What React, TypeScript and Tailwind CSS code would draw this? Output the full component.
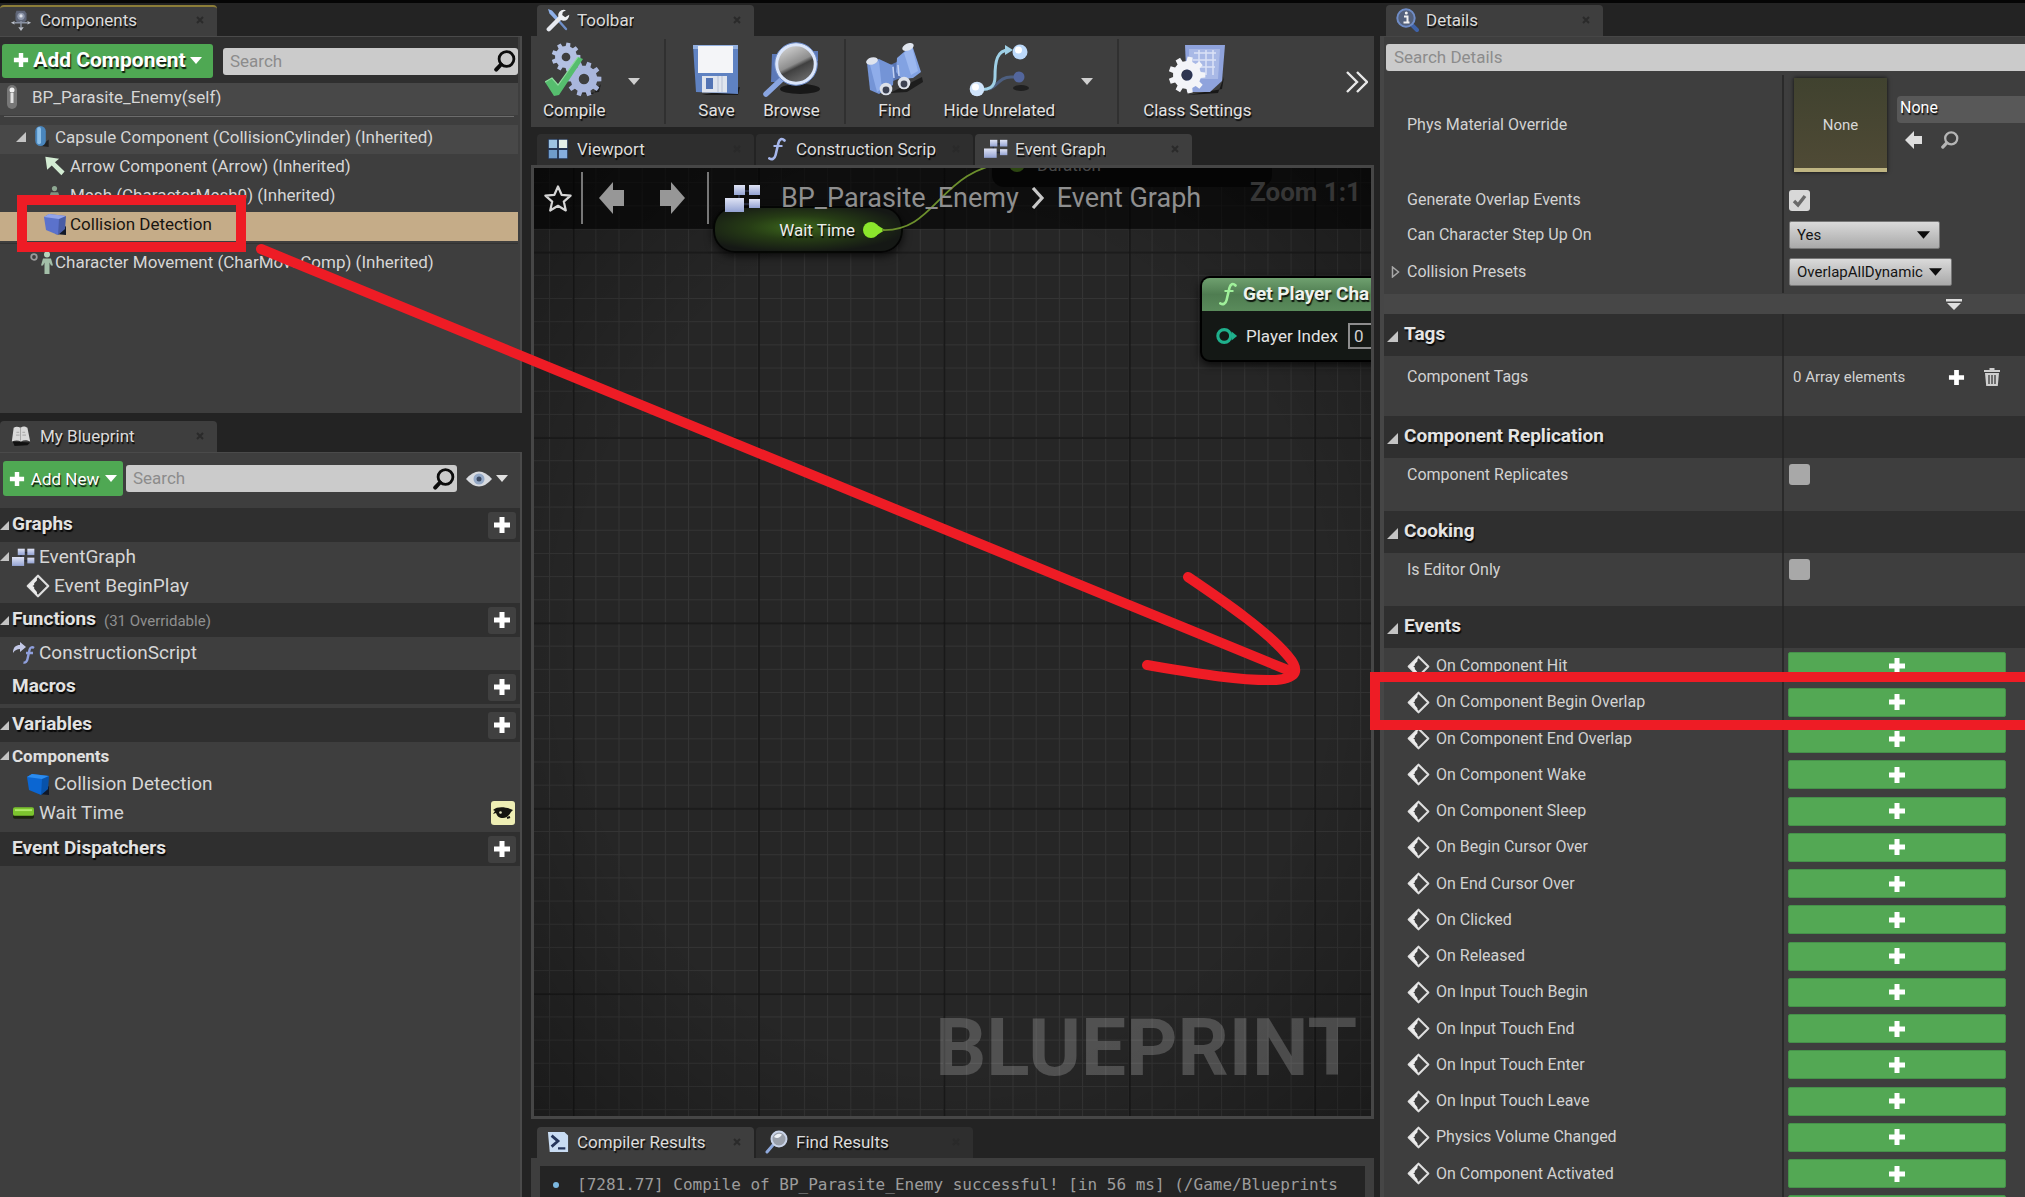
import React, { useState } from "react";
import type { ReactNode } from "react";

const shadow = "[text-shadow:1px_2px_1px_rgba(0,0,0,0.85)]";

/* ---------- small glyphs ---------- */

function Plus({ className }: { className: string }) {
  return (
    <svg viewBox="0 0 18 18" className={className} aria-hidden="true">
      <path d="M6.5 1h5v5.5H17v5h-5.5V17h-5v-5.5H1v-5h5.5z" fill="#fff" />
    </svg>
  );
}

function Caret({ className }: { className: string }) {
  return (
    <svg viewBox="0 0 12 7" className={className} aria-hidden="true">
      <path d="M0 0h12L6 7z" fill="currentColor" />
    </svg>
  );
}

function Expander({ className }: { className: string }) {
  return (
    <svg viewBox="0 0 11 11" className={className} aria-hidden="true">
      <path d="M11 0v11H0z" fill="#c4c4c4" />
    </svg>
  );
}

function SearchGlyph({ className }: { className: string }) {
  return (
    <svg viewBox="0 0 22 22" className={className} fill="none" stroke="currentColor" aria-hidden="true">
      <circle cx="12.5" cy="9" r="7.4" strokeWidth="2.8" />
      <path d="M7 14.5L2.2 19.6" strokeWidth="4" strokeLinecap="round" />
    </svg>
  );
}

function EventDiamond({ className }: { className: string }) {
  return (
    <svg viewBox="0 0 22 22" className={className} aria-hidden="true">
      <path d="M11 1.6L20.4 11 11 20.4 1.6 11z" fill="none" stroke="#dedede" strokeWidth="2" strokeLinejoin="round" />
      <path d="M10 2.500L2 11l8 8.500v-3L7.500 13.500V12L6 11l1.500-1V8.500L10 6z" fill="#ededed" />
    </svg>
  );
}

function GraphBlocks({ className }: { className: string }) {
  return (
    <svg viewBox="0 0 36 28" className={className} aria-hidden="true">
      <defs>
        <linearGradient id="blocks" x1="0" y1="0" x2="0" y2="1">
          <stop offset="0" stopColor="#dfe3f4" />
          <stop offset="1" stopColor="#94a3d3" />
        </linearGradient>
      </defs>
      <path d="M12 7h20M10 20h20M14 8v12" stroke="#23283a" strokeWidth="2" />
      <rect x="9" y="1" width="11" height="10" fill="url(#blocks)" />
      <rect x="24" y="1" width="11" height="10" fill="url(#blocks)" />
      <rect x="0" y="14" width="19" height="14" fill="url(#blocks)" />
      <rect x="24" y="15" width="11" height="9" fill="url(#blocks)" />
    </svg>
  );
}

function FunctionF({ className, color }: { className: string; color: string }) {
  return (
    <svg viewBox="0 0 20 24" className={className} fill="none" stroke={color} aria-hidden="true">
      <path d="M17.5 3.5C15 .8 12.3 2 11.4 6L8.6 18c-.9 3.8-3.6 5-6.3 3.4" strokeWidth="2.6" strokeLinecap="round" />
      <path d="M6.5 9h9" strokeWidth="2" />
    </svg>
  );
}

function gearPath(cx: number, cy: number, r: number, teeth: number) {
  const pts: string[] = [];
  for (let i = 0; i < teeth; i++) {
    const a = (i / teeth) * Math.PI * 2;
    const s = (Math.PI * 2) / teeth;
    [
      [a - s * 0.3, r * 0.76],
      [a - s * 0.2, r],
      [a + s * 0.2, r],
      [a + s * 0.3, r * 0.76],
    ].forEach(([t, d]) => pts.push(`${(cx + Math.cos(t) * d).toFixed(2)},${(cy + Math.sin(t) * d).toFixed(2)}`));
  }
  const h = r * 0.3;
  return `M${pts.join("L")}ZM${cx - h},${cy}a${h},${h} 0 1 0 ${h * 2},0a${h},${h} 0 1 0 ${-h * 2},0Z`;
}

/* ---------- tab icons ---------- */

function ComponentsIcon() {
  return (
    <svg viewBox="0 0 24 24" className="h-[22px] w-[22px]" aria-hidden="true">
      <path d="M7 2h9l2 3v7l-3 3H8l-2-3V5z" fill="#5f6678" />
      <circle cx="12" cy="8" r="4" fill="#8e97ab" />
      <circle cx="12" cy="7.5" r="1.8" fill="#dfe3ea" />
      <path d="M1 15l4-2v4zM23 15l-4-2v4zM9 20h6l-3 4z" fill="#b9bec8" />
      <path d="M5 15h14M12 13v7" stroke="#8b93a4" strokeWidth="1.5" />
    </svg>
  );
}

function BookIcon() {
  return (
    <svg viewBox="0 0 24 24" className="h-[22px] w-[22px]" aria-hidden="true">
      <path d="M3 18l19 1-3 3-14 1z" fill="#111" />
      <path d="M4 3c3-2 5-1 7.500 0C14 1 16 1 19 3l3 15c-4-2-7-2-10 0-3-1.500-6-1.500-10 0z" fill="#d9d9d9" />
      <path d="M11.500 3v14" stroke="#a0a0a0" />
      <path d="M7 8h3M13.500 8h3M6.500 11h4M13.500 11h4" stroke="#b0b0b0" strokeWidth="1.300" />
    </svg>
  );
}

function ToolsIcon() {
  return (
    <svg viewBox="0 0 24 24" className="h-6 w-6" aria-hidden="true">
      <path d="M2 1l4 1.500 7 8-2.500 2.500-7-7.500z" fill="#8eb0e8" />
      <path d="M12 12l8 9" stroke="#6f8fc8" strokeWidth="2.400" strokeLinecap="round" />
      <path d="M2.800 21.200L14 10" stroke="#e6e9ef" strokeWidth="4.400" strokeLinecap="round" />
      <path d="M20 2.200a5.500 5.500 0 1 0 3.200 4.600l-4 2.400-3-2.200.6-3z" fill="#eef0f4" />
    </svg>
  );
}

function DetailsIcon() {
  return (
    <svg viewBox="0 0 24 24" className="h-6 w-6" aria-hidden="true">
      <path d="M16 16l6 6" stroke="#3f62a8" strokeWidth="4" strokeLinecap="round" />
      <circle cx="11" cy="10" r="8.700" fill="#54617c" stroke="#6f8cc6" strokeWidth="2" />
      <path d="M9 8.500h3.500V14M8.500 14.500h6" stroke="#f1f1f1" strokeWidth="2" fill="none" />
      <circle cx="11.300" cy="5" r="1.500" fill="#f1f1f1" />
    </svg>
  );
}

function ViewportIcon() {
  return (
    <svg viewBox="0 0 24 24" className="h-[22px] w-[22px]" aria-hidden="true">
      <rect x="1" y="1" width="22" height="22" fill="#253552" />
      <path d="M2 2h9v9H2z" fill="#9dc3e2" />
      <path d="M13 2h9v9h-9z" fill="#e4efe8" />
      <path d="M2 13h9v9H2z" fill="#6f9ccb" />
      <path d="M13 13h9v9h-9z" fill="#86aede" />
    </svg>
  );
}

function CompilerIcon() {
  return (
    <svg viewBox="0 0 24 24" className="h-[22px] w-[22px]" aria-hidden="true">
      <path d="M1 1h18l4 4v18H3z" fill="#c9dcf3" />
      <path d="M5 5l7 6-7 6" fill="none" stroke="#26365c" strokeWidth="3" />
      <path d="M12 19h8" stroke="#26365c" strokeWidth="2.500" />
    </svg>
  );
}

function FindResultsIcon() {
  return (
    <svg viewBox="0 0 24 24" className="h-6 w-6" aria-hidden="true">
      <path d="M8 15l-6 7" stroke="#8fa9dc" strokeWidth="3" strokeLinecap="round" />
      <circle cx="14" cy="9" r="7.500" fill="#9aa0ab" stroke="#c9d3e8" strokeWidth="2" />
      <path d="M9 7a5.500 5.500 0 0 1 8-2.500C15 8 12 9 9 7z" fill="#eef1f6" />
    </svg>
  );
}

/* ---------- toolbar icons ---------- */

function CompileIcon() {
  return (
    <svg viewBox="0 0 58 56" className="h-14 w-[58px]" aria-hidden="true">
      <path d="M34 52l20-2 2-8-8 10z" fill="#1c1c1c" />
      <path d={gearPath(21, 15, 14.5, 9)} fill="#b3c0e2" fillRule="evenodd" />
      <path d={gearPath(39, 37, 17.5, 10)} fill="#a9b6dc" fillRule="evenodd" />
      <path d="M0 40l7-4 6 7L33 15l5 2-24 36-5 1z" fill="#56bd6e" />
      <path d="M0 40l7-4 6 7L33 15" fill="none" stroke="#8edc9c" strokeWidth="1.200" />
    </svg>
  );
}

function SaveIcon() {
  return (
    <svg viewBox="0 0 50 54" className="h-[54px] w-[50px]" aria-hidden="true">
      <path d="M10 52l38-8-2 8z" fill="#1b1b1b" />
      <path d="M1 2h45v49L4 49z" fill="#5f82c2" />
      <path d="M1 2h45v4H1z" fill="#93b0e0" />
      <path d="M6 3h35v27H6z" fill="#f4f5f8" />
      <path d="M10 33h25v16.500H10z" fill="#dfe4ee" />
      <path d="M14 35h7v11h-7z" fill="#5273b4" />
      <path d="M26 33v16M30 33v16" stroke="#b8c1d4" />
    </svg>
  );
}

function BrowseIcon() {
  return (
    <svg viewBox="0 0 60 56" className="h-14 w-[60px]" aria-hidden="true">
      <defs>
        <linearGradient id="lens" x1="0.2" y1="0" x2="0.7" y2="1">
          <stop offset="0" stopColor="#d8d8d8" />
          <stop offset="0.5" stopColor="#8e8e8e" />
          <stop offset="0.6" stopColor="#404040" />
          <stop offset="1" stopColor="#707070" />
        </linearGradient>
      </defs>
      <ellipse cx="38" cy="47" rx="20" ry="5" fill="#181818" />
      <path d="M10 12h10v28H9zM52 9h4v10h-4z" fill="#5c79b8" />
      <path d="M19 38L4 52" stroke="#89a5e0" strokeWidth="5.500" strokeLinecap="round" />
      <circle cx="34" cy="22" r="19.500" fill="url(#lens)" stroke="#dbe6fb" strokeWidth="3.500" />
      <circle cx="34" cy="22" r="21.300" fill="none" stroke="#6c8bc9" strokeWidth="1" />
    </svg>
  );
}

function FindIcon() {
  return (
    <svg viewBox="0 0 58 54" className="h-[54px] w-[58px]" aria-hidden="true">
      <path d="M24 50l32-16 1 5-16 10z" fill="#1d1d1d" />
      <path d="M24 22l9-4 4 16-10 4z" fill="#5874b2" />
      <path d="M1 20l12-4 15 7-1 19-14 9-9-4z" fill="#7494d6" />
      <path d="M31 15L46 2l9 27-8 6-11 1-6-7z" fill="#82a2e2" />
      <path d="M4 22l9-4 3 28-5 3z" fill="#8fadea" />
      <path d="M38 10l8-6 6 24-7 4z" fill="#9cb8ef" />
      <ellipse cx="6" cy="18" rx="6" ry="3.500" fill="#dfe4ee" transform="rotate(-14 6 18)" />
      <ellipse cx="42" cy="4" rx="6" ry="3.500" fill="#dfe4ee" transform="rotate(-24 42 4)" />
      <circle cx="20" cy="46" r="6.300" fill="#dde1e9" />
      <circle cx="20" cy="47" r="3.400" fill="#3d4252" />
      <circle cx="38" cy="40" r="6.300" fill="#dde1e9" />
      <circle cx="38" cy="41" r="3.400" fill="#3d4252" />
      <path d="M27 24l1 11M32 22l1 11" stroke="#c3d2f3" strokeWidth="1.500" />
    </svg>
  );
}

function HideIcon() {
  return (
    <svg viewBox="0 0 60 54" className="h-[54px] w-[60px]" aria-hidden="true">
      <ellipse cx="52" cy="45" rx="8" ry="3" fill="#202020" />
      <path d="M20 46c8-2 10-12 22-12h8" fill="none" stroke="#4d5f80" strokeWidth="3" />
      <circle cx="50" cy="34" r="5.500" fill="#53669c" />
      <path d="M8 46c12 2 18-2 18-12 0-16 2-27 14-27" fill="none" stroke="#9fd0e6" strokeWidth="3" />
      <path d="M36 2l8 5-8 5z" fill="#9fd0e6" />
      <circle cx="8" cy="46" r="7.300" fill="#cfe3fa" />
      <circle cx="6.500" cy="44" r="3.500" fill="#fff" />
      <circle cx="51" cy="9" r="7.500" fill="#bcd9fa" />
      <circle cx="49.500" cy="7" r="3.500" fill="#fff" />
    </svg>
  );
}

function ClassSettingsIcon() {
  return (
    <svg viewBox="0 0 58 54" className="h-[54px] w-[58px]" aria-hidden="true">
      <path d="M20 52l34-6 2-12-6 16z" fill="#181818" />
      <path d="M17 2h40l-3 36-12 11H19z" fill="#8fa3dc" />
      <path d="M21 6h31l-2 30H21z" fill="#a9b9e6" />
      <path d="M26 10h22M25 17h23M25 24h22M31 7v25M38 7v25M45 7v25" stroke="#dbe2f6" strokeWidth="1.500" />
      <path d={gearPath(19, 32, 18.5, 9)} fill="#f3f4f8" fillRule="evenodd" />
      <circle cx="19" cy="32" r="5.500" fill="#2e3550" />
    </svg>
  );
}

/* ---------- shared widgets ---------- */

function Tab({ icon, label, active = true, accent = false }: { icon: ReactNode; label: string; active?: boolean; accent?: boolean }) {
  return (
    <div
      className={`flex h-[31px] w-[217px] items-center overflow-hidden rounded-t-sm pl-[9px] pr-[13px] ${active ? "bg-[#3e3e3e]" : "bg-[#2e2e2e]"} ${accent ? "border-t-2 border-[#8c7d38] pb-1" : "pb-0.5"}`}
    >
      <button type="button" className="flex min-w-0 flex-1 items-center gap-[7px]">
        <span className="flex w-6 shrink-0 justify-center">{icon}</span>
        <span className={`truncate text-clip text-[17px] leading-6 text-[#dcdcdc] ${shadow}`}>{label}</span>
      </button>
      <button type="button" aria-label={`Close ${label}`} className="shrink-0">
        <svg viewBox="0 0 8 8" className="h-2 w-2" aria-hidden="true">
          <path d="M1 1l6 6M7 1L1 7" stroke="#2a2a2a" strokeWidth="2" />
        </svg>
      </button>
    </div>
  );
}

function SearchBox({ label, className }: { label: string; className: string }) {
  return (
    <div className={`flex h-[27px] min-w-0 flex-1 items-center rounded-[3px] bg-[#cbcbcb] pl-[7px] pr-0.5 ${className}`}>
      <input
        type="text"
        aria-label={label}
        placeholder="Search"
        className="min-w-0 flex-1 bg-transparent pb-px text-[17px] leading-6 text-black outline-none placeholder:text-[#8c8c8c]"
      />
      <SearchGlyph className="h-[22px] w-[22px] shrink-0 text-[#0c0c0c]" />
    </div>
  );
}

function CubeIcon({ top, front }: { top: string; front: string }) {
  return (
    <svg viewBox="0 0 24 24" className="h-6 w-6 shrink-0" aria-hidden="true">
      <path d="M12 22l11-8v9z" fill="#111827" />
      <path d="M1 5l5-3 17 2-1 13-7 6L3 18z" fill={front} />
      <path d="M1 5l5-3 17 2-7 3z" fill={top} />
      <path d="M16 7l7-3-1 13-7 6z" fill="#00000030" />
    </svg>
  );
}

/* ---------- left column ---------- */

const treeRow = "flex h-[29px] items-center pb-1.5";

function ComponentsPanel() {
  return (
    <section className="flex min-h-0 flex-col">
      <Tab icon={<ComponentsIcon />} label="Components" accent />
      <div className="flex-1 border-r-2 border-t border-[#4a4a4a] bg-[#3e3e3e] pr-0.5">
        <div className="flex items-center gap-2.5 bg-[#2f2f2f] pb-[5px] pl-0.5 pt-[7px]">
          <button
            type="button"
            className={`flex h-[34px] w-[211px] shrink-0 items-center justify-center gap-1 rounded-[3px] bg-[#4fa853] pb-0.5 text-[21px] font-bold leading-7 text-white ${shadow}`}
          >
            <Plus className="h-4 w-4" />
            Add Component
            <Caret className="h-[7px] w-3" />
          </button>
          <SearchBox label="Search components" className="" />
        </div>
        <div className="flex h-8 items-center bg-[#484848] pb-1">
          <svg viewBox="0 0 12 24" className="mx-1.5 h-6 w-3" aria-hidden="true">
            <rect x="1" y="0" width="10" height="24" rx="5" fill="#777" />
            <circle cx="6" cy="5" r="2.500" fill="#f2f2f2" />
            <path d="M6 8v10" stroke="#e2e2e2" strokeWidth="3" />
          </svg>
          <span className="ml-2 text-[17px] leading-6 text-[#d6d6d6]">BP_Parasite_Enemy(self)</span>
        </div>
        <div className="mx-1 mb-2 mt-px h-px bg-[#6c6c6c]" />
        <ul className="text-[17px] leading-6 text-[#d6d6d6]">
          <li className={`${treeRow} bg-[#484848] pl-4`}>
            <Expander className="h-2.5 w-2.5" />
            <svg viewBox="0 0 16 24" className="ml-[7px] mr-1.5 h-[23px] w-4" aria-hidden="true">
              <path d="M8 22l8-7v8z" fill="#222" />
              <rect x="2" y="1" width="11" height="21" rx="5.500" fill="#4a86bd" />
              <rect x="4" y="2" width="4" height="18" rx="2" fill="#8bbfe8" />
            </svg>
            Capsule Component (CollisionCylinder) (Inherited)
          </li>
          <li className={`${treeRow} pl-[43px]`}>
            <svg viewBox="0 0 24 24" className="mr-1 h-[22px] w-[23px]" aria-hidden="true">
              <path d="M2 2l15 2-4.500 4L23 18l-3.500 4L9 11.500 4 16z" fill="#d3ecd3" />
            </svg>
            Arrow Component (Arrow) (Inherited)
          </li>
          <li className={`${treeRow} pl-[43px]`}>
            <svg viewBox="0 0 24 24" className="mr-1 h-[22px] w-[23px]" aria-hidden="true">
              <circle cx="12" cy="5" r="2.800" fill="#8ea892" />
              <path d="M8 9h8l2 6h-2l-1-2v9H9v-9l-1 2H6z" fill="#7d9481" />
            </svg>
            Mesh (CharacterMesh0) (Inherited)
          </li>
          <li className={`${treeRow} bg-[#c5ac88] pl-[43px] text-[#181410]`}>
            <span className="mr-[3px]">
              <CubeIcon top="#93a4ea" front="#5b72cc" />
            </span>
            Collision Detection
          </li>
          <li className="mb-1 mt-0.5 h-px bg-[#323232]" />
          <li className="flex h-[29px] items-center pb-0.5 pl-[30px]">
            <svg viewBox="0 0 24 24" className="mr-px h-6 w-6" aria-hidden="true">
              <circle cx="4" cy="7" r="2.800" fill="none" stroke="#9a9a9a" strokeWidth="1.800" />
              <circle cx="17" cy="4.500" r="3" fill="#b8d4bc" />
              <path d="M13 8.500h8l2 7h-2l-1.500-3V24h-5V12.500L13 15.500h-2z" fill="#a3bfa8" />
            </svg>
            Character Movement (CharMoveComp) (Inherited)
          </li>
        </ul>
      </div>
    </section>
  );
}

function CategoryHeader({ label, note, open }: { label: string; note?: string; open: boolean }) {
  return (
    <div className="flex h-[34px] items-center bg-[#2f2f2f] pr-1">
      <span className="w-3">{open && <Expander className="h-[11px] w-[9px]" />}</span>
      <h3 className={`pb-0.5 text-[19px] font-bold leading-6 text-[#e2e2e2] ${shadow}`}>{label}</h3>
      {note && <span className="ml-2 mt-0.5 text-[15px] leading-5 text-[#909090]">{note}</span>}
      <button
        type="button"
        aria-label={`Add to ${label}`}
        className="ml-auto flex h-[27px] w-7 items-center justify-center rounded-[3px] bg-[#404040]"
      >
        <Plus className="h-[18px] w-[18px]" />
      </button>
    </div>
  );
}

const listRow = "flex h-[29px] items-center text-[19px] leading-6 text-[#d6d6d6]";

function MyBlueprintPanel() {
  return (
    <section className="flex min-h-0 flex-col">
      <Tab icon={<BookIcon />} label="My Blueprint" />
      <div className="flex-1 border-r-2 border-t border-[#4a4a4a] bg-[#3e3e3e]">
        <div className="flex items-center pb-3 pl-[3px] pr-3 pt-2">
          <button
            type="button"
            className={`flex h-[35px] w-[120px] shrink-0 items-center justify-center gap-1.5 rounded-[3px] bg-[#4fa853] text-[17px] leading-6 text-white ${shadow}`}
          >
            <Plus className="h-4 w-4" />
            Add New
            <Caret className="h-[7px] w-3" />
          </button>
          <SearchBox label="Search blueprint" className="ml-[3px]" />
          <button type="button" aria-label="View options" className="ml-[9px] flex items-center gap-1 text-[#e0e0e0]">
            <svg viewBox="0 0 26 16" className="h-4 w-[26px]" aria-hidden="true">
              <path d="M0 8Q13-7 26 8 13 23 0 8z" fill="#d7dadf" />
              <circle cx="13" cy="8" r="5.500" fill="#93a8c6" />
              <circle cx="13" cy="8" r="2.500" fill="#3c4a63" />
            </svg>
            <Caret className="h-[7px] w-3" />
          </button>
        </div>
        <CategoryHeader label="Graphs" open />
        <div className={listRow}>
          <Expander className="h-[11px] w-[9px]" />
          <GraphBlocks className="ml-[3px] mr-1 h-5 w-[23px]" />
          EventGraph
        </div>
        <div className={`${listRow} mb-[3px] pl-[26px]`}>
          <EventDiamond className="mr-1 h-6 w-6" />
          Event BeginPlay
        </div>
        <CategoryHeader label="Functions" note="(31 Overridable)" open />
        <div className="flex h-[33px] items-center pb-0.5 pl-3 text-[19px] leading-6 text-[#d6d6d6]">
          <svg viewBox="0 0 24 24" className="mr-[3px] h-6 w-6" aria-hidden="true">
            <path d="M1 12c0-6 3-8 7-8V1l6 5-6 5V8c-3 0-5 1-7 4z" fill="#c3c8e6" />
            <path d="M22 7c-2-1.500-4-.5-4.500 2l-2 9c-.5 2.500-2 4-4 3.500M14 12h7" fill="none" stroke="#8f9fdc" strokeWidth="2.400" />
          </svg>
          ConstructionScript
        </div>
        <CategoryHeader label="Macros" open={false} />
        <div className="mt-1" />
        <CategoryHeader label="Variables" open />
        <div className="flex h-[27px] items-center gap-[3px] text-[17px] font-bold leading-6 text-[#e0e0e0]">
          <Expander className="h-[11px] w-[9px]" />
          Components
        </div>
        <div className={`${listRow} pl-[26px]`}>
          <span className="mr-1">
            <CubeIcon top="#2b8cf0" front="#0b66d2" />
          </span>
          Collision Detection
        </div>
        <div className={`${listRow} pl-[13px] pr-[5px]`}>
          <svg viewBox="0 0 22 12" className="mr-[5px] h-3 w-[21px]" aria-hidden="true">
            <rect x="0" y="1" width="22" height="11" rx="2" fill="#1c2410" />
            <rect x="0" y="0" width="22" height="9" rx="2" fill="#7cc52e" />
            <path d="M2 3h18" stroke="#b0ea6a" strokeWidth="2" />
          </svg>
          Wait Time
          <button type="button" aria-label="Toggle visibility" className="ml-auto h-6 w-6 rounded-[3px] bg-[#eeeeb4]">
            <svg viewBox="0 0 24 24" className="h-6 w-6" aria-hidden="true">
              <path d="M2 9C7 5 15 6 22 9l-2 2C18 15 15 17 12 17c-4 0-6-2-7-5l-3 1 2-3z" fill="#161610" />
              <circle cx="9.500" cy="11.500" r="1.300" fill="#e6e6c0" />
              <path d="M16 17l3-1" stroke="#161610" strokeWidth="2" />
            </svg>
          </button>
        </div>
        <div className="mt-[5px]" />
        <CategoryHeader label="Event Dispatchers" open={false} />
      </div>
    </section>
  );
}

/* ---------- centre column ---------- */

function ToolButton({ icon, label, className }: { icon: ReactNode; label: string; className: string }) {
  return (
    <button type="button" className={`flex shrink-0 flex-col items-center ${className}`}>
      <span className="flex h-[57px] items-center">{icon}</span>
      <span className={`text-[17px] leading-6 text-[#e2e2e2] ${shadow}`}>{label}</span>
    </button>
  );
}

function ToolMenu({ label, className }: { label: string; className: string }) {
  return (
    <button type="button" aria-label={label} className={`text-[#cfcfcf] ${className}`}>
      <Caret className="h-[7px] w-3" />
    </button>
  );
}

const divider = "h-[85px] w-0.5 shrink-0 bg-[#303030]";

function Toolbar() {
  return (
    <section>
      <div className="pl-1.5">
        <Tab icon={<ToolsIcon />} label="Toolbar" />
      </div>
      <div className="flex h-[91px] items-center overflow-hidden bg-[#3e3e3e] pr-1.5">
        <ToolButton className="ml-3" icon={<CompileIcon />} label="Compile" />
        <ToolMenu label="Compile options" className="ml-[22px]" />
        <div className={`${divider} ml-6`} />
        <ToolButton className="ml-[26px]" icon={<SaveIcon />} label="Save" />
        <ToolButton className="ml-5" icon={<BrowseIcon />} label="Browse" />
        <div className={`${divider} ml-[22px]`} />
        <ToolButton className="ml-5" icon={<FindIcon />} label="Find" />
        <ToolButton className="ml-5" icon={<HideIcon />} label="Hide Unrelated" />
        <ToolMenu label="Hide unrelated options" className="ml-[26px]" />
        <div className={`${divider} ml-6`} />
        <ToolButton className="ml-6" icon={<ClassSettingsIcon />} label="Class Settings" />
        <button type="button" aria-label="More tools" className="ml-auto">
          <svg viewBox="0 0 22 22" className="h-[22px] w-[22px]" fill="none" stroke="#e8e8e8" strokeWidth="2.400" aria-hidden="true">
            <path d="M1 1l10 10L1 21M11 1l10 10-10 10" />
          </svg>
        </button>
      </div>
    </section>
  );
}

function GridBackdrop() {
  return (
    <svg className="absolute inset-0 h-full w-full" aria-hidden="true">
      <defs>
        <pattern id="minor" x="15" y="60.500" width="23.175" height="23.175" patternUnits="userSpaceOnUse">
          <path d="M.5 0v23.175M0 .5h23.175" stroke="#343434" strokeWidth="1" />
        </pattern>
        <pattern id="major" x="38.500" y="83.500" width="185.400" height="185.400" patternUnits="userSpaceOnUse">
          <path d="M1 0v185.400M0 1h185.400" stroke="#151515" strokeWidth="1.600" />
        </pattern>
        <radialGradient id="vignette" cx="50%" cy="50%" r="75%">
          <stop offset="0.6" stopColor="#000" stopOpacity="0" />
          <stop offset="1" stopColor="#000" stopOpacity="0.35" />
        </radialGradient>
      </defs>
      <rect width="100%" height="100%" fill="#262626" />
      <rect width="100%" height="100%" fill="url(#minor)" />
      <rect width="100%" height="100%" fill="url(#major)" />
      <rect width="100%" height="100%" fill="url(#vignette)" />
    </svg>
  );
}

function NavArrow({ flip = false, label }: { flip?: boolean; label: string }) {
  return (
    <button type="button" aria-label={label}>
      <svg viewBox="0 0 26 32" className={flip ? "h-8 w-[26px] -scale-x-100" : "h-8 w-[26px]"} aria-hidden="true">
        <path d="M0 16L14 0v8h11v16H14v8z" fill="#979797" />
      </svg>
    </button>
  );
}

function GraphView() {
  return (
    <section className="flex min-h-0 flex-col">
      <div className="flex gap-0.5 pl-1.5">
        <Tab icon={<ViewportIcon />} label="Viewport" active={false} />
        <Tab icon={<FunctionF className="h-6 w-5" color="#a6b6ea" />} label="Construction Scrip" active={false} />
        <Tab icon={<GraphBlocks className="h-[19px] w-6" />} label="Event Graph" />
      </div>
      <div className="relative min-h-0 flex-1 overflow-hidden border-[3px] border-[#464646]">
        <GridBackdrop />

        {/* nodes on the free canvas */}
        <div className="absolute left-[458px] top-[-40px] h-[59px] w-[280px] rounded-xl bg-[#0d0d0d]">
          <span className="absolute left-[45px] top-[25px] text-[17px] leading-6 text-[#b5b5b5]">Duration</span>
          <svg viewBox="0 0 16 16" className="absolute left-[17px] top-[28px] h-4 w-4" aria-hidden="true">
            <circle cx="8" cy="8" r="8" fill="#6fae2c" />
          </svg>
        </div>

        <div className="absolute inset-x-0 top-0 h-[61px] bg-black/60" />

        <div className="absolute left-[179px] top-[38px] flex h-[47px] w-[190px] items-center justify-end gap-2 rounded-[22px] border-2 border-black/80 bg-[radial-gradient(ellipse_at_45%_45%,#3d681c_0%,#263c15_35%,#151815_75%)] pr-4 shadow-[0_3px_8px_rgba(0,0,0,0.7)]">
          <span className={`text-[17px] leading-6 text-[#ececec] ${shadow}`}>Wait Time</span>
          <svg viewBox="0 0 22 16" className="h-4 w-[22px]" aria-hidden="true">
            <path d="M14 3l8 5-8 5z" fill="#8be62c" />
            <circle cx="8" cy="8" r="8" fill="#8be62c" />
          </svg>
        </div>
        <svg className="absolute left-[344px] top-0 h-16 w-36" viewBox="0 0 144 64" aria-hidden="true">
          <path d="M4 62C60 64 60 0 134 -6" fill="none" stroke="#6c8f2c" strokeWidth="1.800" />
        </svg>

        <div className="absolute inset-x-0 top-0 flex h-[61px] items-center pb-0.5 pl-[9px]">
          <button type="button" aria-label="Bookmark">
            <svg viewBox="0 0 30 28" className="h-7 w-[30px]" aria-hidden="true">
              <path d="M15 2.500l3.600 8.300 9 .8-6.800 6 2 8.900L15 21.800l-7.800 4.700 2-8.900-6.800-6 9-.8z" fill="none" stroke="#d6d6d6" strokeWidth="2.200" strokeLinejoin="round" />
            </svg>
          </button>
          <div className="ml-2 h-[52px] w-0.5 bg-[#777]" />
          <div className="ml-4 flex gap-[34px]">
            <NavArrow label="Back" />
            <NavArrow label="Forward" flip />
          </div>
          <div className="ml-[22px] h-[52px] w-0.5 bg-[#777]" />
          <GraphBlocks className="ml-4 h-7 w-9" />
          <div className="ml-5 flex items-center text-[27px] leading-8 text-[#8f8f8f]">
            <span>BP_Parasite_Enemy</span>
            <svg viewBox="0 0 14 22" className="mx-3 h-[22px] w-3.5" aria-hidden="true">
              <path d="M2 1l9 10-9 10" fill="none" stroke="#c8c8c8" strokeWidth="3.200" />
            </svg>
            <span>Event Graph</span>
          </div>
        </div>
        <span className="absolute right-2.5 top-2 text-[26px] font-bold leading-8 text-[#363636]">Zoom 1:1</span>

        <div className="absolute left-[666px] top-[108px] h-[86px] w-[300px] overflow-hidden rounded-[10px] border-2 border-black bg-[#141815] shadow-[0_3px_8px_rgba(0,0,0,0.7)]">
          <div className="flex h-[33px] items-center bg-gradient-to-b from-[#6fa06f] via-[#4f7d51] to-[#5a8b5b] pb-0.5 pl-4">
            <FunctionF className="h-6 w-5" color="#9ff09a" />
            <span className={`ml-[5px] text-[19px] font-bold leading-6 text-[#eef3ee] ${shadow}`}>Get Player Cha</span>
          </div>
          <div className="flex h-[50px] items-center pl-3.5">
            <svg viewBox="0 0 24 18" className="h-[18px] w-[22px]" aria-hidden="true">
              <circle cx="9" cy="9" r="7" fill="none" stroke="#1fb08c" strokeWidth="3.400" />
              <path d="M17 4l6 5-6 5z" fill="#1fb08c" />
            </svg>
            <label htmlFor="player-index" className="ml-2 text-[17px] leading-6 text-[#e2e2e2]">
              Player Index
            </label>
            <input
              id="player-index"
              type="text"
              defaultValue="0"
              className="ml-2.5 h-[26px] w-10 border-2 border-[#8d8d8d] bg-transparent pl-1 text-[17px] leading-5 text-[#d0d0d0]"
            />
          </div>
        </div>

        <span className="absolute bottom-[22px] right-3.5 text-[80px] font-bold leading-[92px] text-white/20">BLUEPRINT</span>
      </div>
    </section>
  );
}

function ResultsPanel() {
  return (
    <section>
      <div className="flex gap-0.5 pl-1.5">
        <Tab icon={<CompilerIcon />} label="Compiler Results" />
        <Tab icon={<FindResultsIcon />} label="Find Results" active={false} />
      </div>
      <div className="border-x-[9px] border-t-[8px] border-[#3e3e3e] bg-[#242424]">
        <p className="flex h-[31px] items-center overflow-hidden whitespace-pre pl-[13px] pt-1.5 font-['DejaVu_Sans_Mono',monospace] text-[16px] leading-5 text-[#9c9c9c]">
          <span className="mr-[18px] h-1.5 w-1.5 shrink-0 rounded-full bg-[#7cb8e0]" />
          {"[7281.77] Compile of BP_Parasite_Enemy successful! [in 56 ms] (/Game/Blueprints"}
        </p>
      </div>
    </section>
  );
}

/* ---------- details column ---------- */

function PropRow({ label, htmlFor, className, pad = "", lead, children }: { label: string; htmlFor?: string; className: string; pad?: string; lead?: ReactNode; children: ReactNode }) {
  return (
    <div className={`grid grid-cols-[398px_1fr] ${className}`}>
      <div className={`flex items-center pl-[7px] text-[16px] leading-5 text-[#d2d2d2] ${pad}`}>
        <span className="w-4 shrink-0">{lead}</span>
        <label htmlFor={htmlFor}>{label}</label>
      </div>
      <div className={`flex items-center border-l-2 border-[#2a2a2a] pl-[5px] ${pad}`}>{children}</div>
    </div>
  );
}

function SectionHeader({ label }: { label: string }) {
  return (
    <div className="grid h-[42px] grid-cols-[398px_1fr] bg-[#2f2f2f]">
      <div className="flex items-center gap-1.5 pb-0.5 pl-[3px]">
        <Expander className="mt-1 h-[11px] w-[11px]" />
        <h3 className={`text-[19px] font-bold leading-6 text-[#e4e4e4] ${shadow}`}>{label}</h3>
      </div>
      <div className="border-l-2 border-[#262626]" />
    </div>
  );
}

function Check({ id, initial }: { id: string; initial: boolean }) {
  const [on, setOn] = useState(initial);
  return (
    <span className="relative flex h-[21px] w-[21px]">
      <input
        id={id}
        type="checkbox"
        checked={on}
        onChange={() => setOn(!on)}
        className="h-[21px] w-[21px] appearance-none rounded-[3px] bg-[#a8a8a8] checked:bg-[#d8d8d8]"
      />
      {on && (
        <svg viewBox="0 0 21 21" className="pointer-events-none absolute inset-0 h-[21px] w-[21px]" aria-hidden="true">
          <path d="M5 11l4 4 7-9" fill="none" stroke="#6a6a6a" strokeWidth="3.400" />
        </svg>
      )}
    </span>
  );
}

function Dropdown({ id, value, className }: { id: string; value: string; className: string }) {
  return (
    <span className={`relative flex items-center ${className}`}>
      <select
        id={id}
        defaultValue={value}
        className="h-7 w-full appearance-none rounded-[2px] border border-[#777] bg-gradient-to-b from-[#dadada] to-[#a9a9a9] pl-[7px] text-[15px] leading-5 text-[#141414]"
      >
        <option>{value}</option>
      </select>
      <Caret className="pointer-events-none absolute right-2.5 h-2 w-[13px] text-[#0c0c0c]" />
    </span>
  );
}

const events = [
  "On Component Hit",
  "On Component Begin Overlap",
  "On Component End Overlap",
  "On Component Wake",
  "On Component Sleep",
  "On Begin Cursor Over",
  "On End Cursor Over",
  "On Clicked",
  "On Released",
  "On Input Touch Begin",
  "On Input Touch End",
  "On Input Touch Enter",
  "On Input Touch Leave",
  "Physics Volume Changed",
  "On Component Activated",
];

function EventRow({ name }: { name?: string }) {
  return (
    <div className="grid grid-cols-[398px_1fr]">
      <div className="flex items-center gap-1.5 pl-[23px] text-[16px] leading-5 text-[#d2d2d2]">
        {name && <EventDiamond className="h-[23px] w-[23px]" />}
        {name}
      </div>
      <div className="flex items-center border-l-2 border-[#2a2a2a] pl-1 pr-[19px]">
        <button
          type="button"
          aria-label={name ? `Add ${name}` : "Add event"}
          className="flex h-[29px] flex-1 items-center justify-center rounded-[2px] border border-[#45914a] bg-[#53a854]"
        >
          <Plus className="h-[18px] w-[18px]" />
        </button>
      </div>
    </div>
  );
}

function DetailsPanel() {
  return (
    <section className="flex min-h-0 flex-col overflow-hidden">
      <div className="pl-1.5">
        <Tab icon={<DetailsIcon />} label="Details" />
      </div>
      <div className="min-h-0 flex-1 overflow-hidden border-l-4 border-t border-[#464646] bg-[#3e3e3e]">
        <div className="pb-1 pl-0.5 pt-[7px]">
          <input
            type="text"
            aria-label="Search Details"
            placeholder="Search Details"
            className="block h-[27px] w-full rounded-l-[3px] bg-[#cbcbcb] pb-0.5 pl-2 text-[17px] leading-6 text-black outline-none placeholder:text-[#8c8c8c]"
          />
        </div>
        <PropRow label="Phys Material Override" className="h-[106px]" pad="pb-1.5">
          <div className="ml-[5px] flex h-[94px] w-[93px] items-center justify-center border-b-4 border-[#bfb582] bg-gradient-to-b from-[#40422f] to-[#4f4a35] pt-1 text-[15px] leading-5 text-[#d8d8d8] shadow-[0_0_4px_rgba(0,0,0,0.8)]">
            None
          </div>
          <div className="ml-2.5 flex flex-1 flex-col gap-2 pb-1.5">
            <button type="button" className={`flex h-[27px] items-center rounded-l-[4px] bg-[#585858] pb-0.5 pl-[3px] text-left text-[16px] leading-5 text-white ${shadow}`}>
              None
            </button>
            <div className="flex gap-[18px] pl-2">
              <button type="button" aria-label="Use selected asset">
                <svg viewBox="0 0 18 18" className="h-[18px] w-[18px]" aria-hidden="true">
                  <path d="M0 9L9 0v5h8v8H9v5z" fill="#dedede" />
                </svg>
              </button>
              <button type="button" aria-label="Browse to asset" className="text-[#b5b5b5]">
                <SearchGlyph className="h-[18px] w-[18px]" />
              </button>
            </div>
          </div>
        </PropRow>
        <PropRow label="Generate Overlap Events" htmlFor="overlap-events" className="h-[38px]">
          <Check id="overlap-events" initial />
        </PropRow>
        <PropRow label="Can Character Step Up On" htmlFor="step-up" className="h-8">
          <Dropdown id="step-up" value="Yes" className="w-[151px]" />
        </PropRow>
        <PropRow
          label="Collision Presets"
          htmlFor="presets"
          className="h-[42px]"
          lead={
            <svg viewBox="0 0 9 12" className="h-3 w-[9px]" aria-hidden="true">
              <path d="M1.500 1l6 5-6 5z" fill="none" stroke="#a8a8a8" strokeWidth="1.500" />
            </svg>
          }
        >
          <Dropdown id="presets" value="OverlapAllDynamic" className="w-[163px]" />
        </PropRow>
        <div className="mt-px flex h-5 items-center justify-end bg-[#474747] pr-[63px]">
          <button type="button" aria-label="Show advanced">
            <svg viewBox="0 0 16 11" className="h-[11px] w-4" aria-hidden="true">
              <path d="M0 0h16v2.500H0zM1 4h14l-7 7z" fill="#dedede" />
            </svg>
          </button>
        </div>

        <SectionHeader label="Tags" />
        <PropRow label="Component Tags" className="h-[60px]" pad="pb-[18px]">
          <span className="ml-1 text-[15px] leading-5 text-[#d2d2d2]">0 Array elements</span>
          <button type="button" aria-label="Add tag" className="ml-[43px]">
            <Plus className="h-[17px] w-[17px]" />
          </button>
          <button type="button" aria-label="Clear tags" className="ml-[19px]">
            <svg viewBox="0 0 16 18" className="h-[18px] w-4" aria-hidden="true">
              <path d="M5.500 0h5v2H16v2H0V2h5.500zM1 5h14l-1.200 13H2.200z" fill="#cfcfcf" />
              <path d="M5 7v9M8 7v9M11 7v9" stroke="#444" strokeWidth="1.400" />
            </svg>
          </button>
        </PropRow>

        <SectionHeader label="Component Replication" />
        <PropRow label="Component Replicates" htmlFor="replicates" className="h-[53px]" pad="pb-5">
          <Check id="replicates" initial={false} />
        </PropRow>

        <SectionHeader label="Cooking" />
        <PropRow label="Is Editor Only" htmlFor="editor-only" className="h-[53px]" pad="pb-5">
          <Check id="editor-only" initial={false} />
        </PropRow>

        <SectionHeader label="Events" />
        <div className="grid h-[580px] auto-rows-fr">
          {events.map((name) => (
            <EventRow key={name} name={name} />
          ))}
          <EventRow />
        </div>
      </div>
    </section>
  );
}

/* ---------- hand-drawn mark-up over the editor ---------- */

function Annotations() {
  return (
    <svg className="pointer-events-none absolute left-0 top-0" width="2025" height="1197" viewBox="0 0 2025 1197" fill="none" stroke="#ee1c25" strokeWidth="10" aria-hidden="true">
      <rect x="22" y="200" width="219" height="47" />
      <rect x="1375" y="677" width="700" height="48" />
      <path d="M261 249L1290 671" strokeLinecap="round" />
      <path d="M1188 577C1228 604 1268 632 1288 656C1300 670 1298 678 1276 680C1240 681 1200 674 1147 665" strokeLinecap="round" strokeLinejoin="round" />
    </svg>
  );
}

export default function App() {
  return (
    <main className="relative flex h-screen flex-col overflow-hidden bg-[#232323] font-['Roboto',sans-serif]">
      <div className="h-[5px] shrink-0 border-b-2 border-[#232323] bg-[#050505]" />
      <div className="grid min-h-0 flex-1 grid-cols-[522px_1fr_645px]">
        <div className="grid min-h-0 grid-rows-[408fr_776fr] gap-2">
          <ComponentsPanel />
          <MyBlueprintPanel />
        </div>
        <div className="flex min-h-0 min-w-0 flex-col pl-[9px] pr-1.5">
          <Toolbar />
          <div className="mb-2 mt-[7px] flex min-h-0 flex-1 flex-col [&>section]:flex-1">
            <GraphView />
          </div>
          <ResultsPanel />
        </div>
        <DetailsPanel />
      </div>
      <Annotations />
    </main>
  );
}
